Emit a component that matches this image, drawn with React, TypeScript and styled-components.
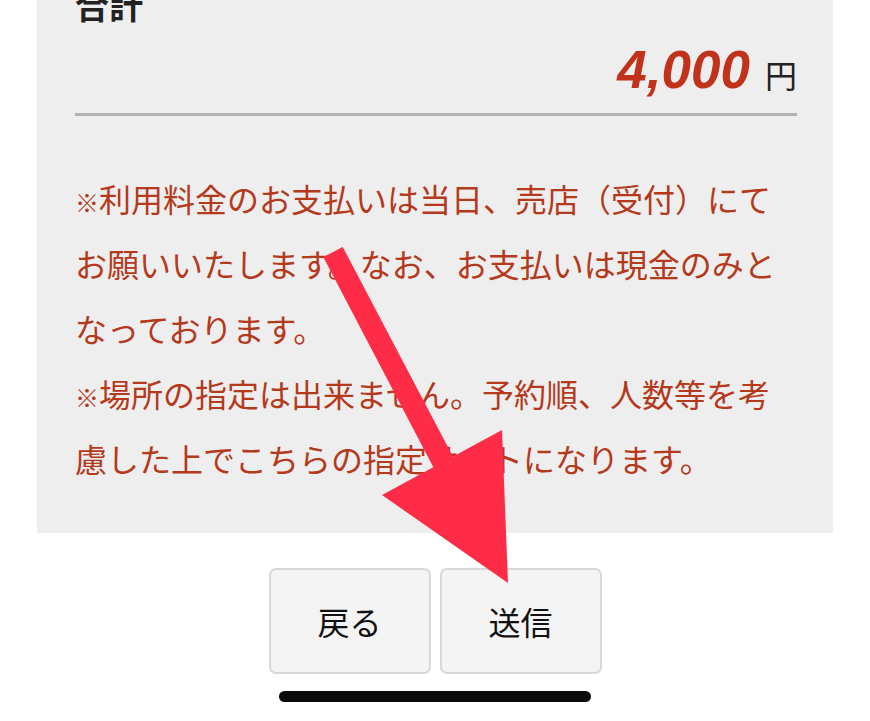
import styled, { createGlobalStyle } from "styled-components";

const GlobalStyle = createGlobalStyle`
  html, body {
    margin: 0;
    padding: 0;
    background: #ffffff;
  }
  body {
    font-family: "Noto Sans CJK JP", "Noto Sans", sans-serif;
    color: #1e1e1e;
  }
`;

const Screen = styled.div`
  position: relative;
  width: 870px;
  height: 721px;
  overflow: hidden;
  background: #ffffff;
`;

const Panel = styled.section`
  margin: 0 37px;
  padding: 0 36px 42px 38px;
  background: #efeeef;
  display: flex;
  flex-direction: column;
`;

const Heading = styled.h2`
  margin: -12px 0 0;
  font-size: 34px;
  line-height: 34px;
  font-weight: 700;
  color: #222222;
`;

const PriceRow = styled.div`
  margin-top: 22px;
  display: flex;
  justify-content: flex-end;
  align-items: baseline;
  gap: 15px;
  height: 52px;
`;

const Amount = styled.span`
  font-family: "Liberation Sans", "Noto Sans", sans-serif;
  font-size: 53px;
  line-height: 52px;
  font-weight: 700;
  font-style: italic;
  color: #c0321a;
`;

const Unit = styled.span`
  font-size: 32px;
  line-height: 32px;
  color: #222222;
`;

const Divider = styled.hr`
  margin: 17px 0 0;
  border: none;
  height: 3px;
  background: #b3b3b3;
`;

const Notes = styled.div`
  margin-top: 50px;
`;

const Note = styled.p`
  margin: 0;
  font-size: 32px;
  line-height: 65px;
  color: #b5391b;
`;

const Mark = styled.span`
  display: inline-block;
  width: 24px;
  font-size: 24px;
  line-height: 1;
  font-weight: 700;
`;

const ButtonRow = styled.div`
  margin-top: 35px;
  display: flex;
  justify-content: center;
  gap: 9px;
`;

const Button = styled.button`
  width: 162px;
  height: 106px;
  box-sizing: border-box;
  border: 2px solid #d8d8d8;
  border-radius: 7px;
  background: #f4f4f4;
  font-family: "Noto Sans CJK JP", sans-serif;
  font-size: 32px;
  color: #111111;
  padding: 0;
`;

const HomeBar = styled.div`
  margin: 17px auto 0;
  width: 312px;
  height: 11px;
  border-radius: 6px;
  background: #0a0a0a;
`;

const Overlay = styled.svg`
  position: absolute;
  top: 0;
  left: 0;
  pointer-events: none;
`;

const App = () => {
  return (
    <Screen>
      <GlobalStyle />
      <Panel>
        <Heading>合計</Heading>
        <PriceRow>
          <Amount>4,000</Amount>
          <Unit>円</Unit>
        </PriceRow>
        <Divider />
        <Notes>
          <Note>
            <Mark>※</Mark>利用料金のお支払いは当日、売店（受付）にてお願いいたします。なお、お支払いは現金のみとなっております。
          </Note>
          <Note>
            <Mark>※</Mark>場所の指定は出来ません。予約順、人数等を考慮した上でこちらの指定サイトになります。
          </Note>
        </Notes>
      </Panel>
      <ButtonRow>
        <Button>戻る</Button>
        <Button>送信</Button>
      </ButtonRow>
      <HomeBar />
      <Overlay width="870" height="721" viewBox="0 0 870 721">
        <polygon
          points="323.3,257.1 342.7,246.9 460,470 440,480"
          fill="#fe2c47"
        />
        <polygon points="382,495 502,430 508,583" fill="#fe2c47" />
      </Overlay>
    </Screen>
  );
};

export default App;
